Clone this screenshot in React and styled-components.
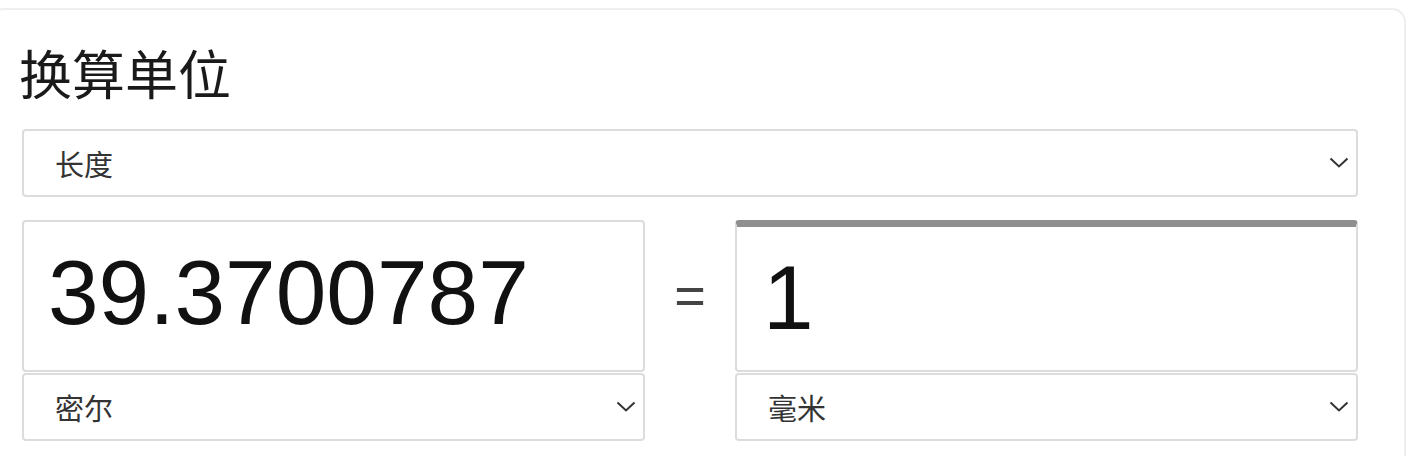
import React from "react";
import styled, { createGlobalStyle } from "styled-components";

const GlobalStyle = createGlobalStyle`
  html, body { margin: 0; padding: 0; background: #ffffff; overflow: hidden; }
  body { padding-top: 8px; font-family: "Noto Sans CJK SC", "Noto Sans", sans-serif; }
`;

const Card = styled.section`
  box-sizing: border-box;
  margin-left: -10px;
  width: 1416px;
  min-height: 470px;
  border: 2px solid #eeeeee;
  border-radius: 14px;
  padding: 35px 46px 30px 30px;
`;

const Title = styled.h1`
  margin: 0 0 30px -3px;
  font-family: "Noto Sans CJK SC", "Microsoft YaHei", sans-serif;
  font-weight: 400;
  font-size: 53px;
  line-height: 1;
  padding-top: 1px;
  color: #1a1a1a;
`;

const Select = styled.div`
  box-sizing: border-box;
  display: flex;
  align-items: center;
  justify-content: space-between;
  height: 68px;
  border: 2px solid #dcdcdc;
  border-radius: 4px;
  padding: 0 7px 0 31px;
  background: #fff;
  font-family: "Noto Sans CJK SC", sans-serif;
  font-size: 29px;
  color: #333333;
`;

const Converter = styled.div`
  display: grid;
  grid-template-columns: 623px 90px 623px;
  grid-template-rows: 152px 68px;
  row-gap: 1px;
  margin-top: 23px;
`;

const ValueBox = styled.div`
  box-sizing: border-box;
  display: flex;
  align-items: center;
  border: 2px solid #dcdcdc;
  border-top: ${(p) => (p.$active ? "7px solid #8f8f8f" : "2px solid #dcdcdc")};
  border-radius: 4px;
  padding: 0 22px ${(p) => (p.$active ? "1px" : "6px")} ${(p) => (p.$active ? "26px" : "24px")};
  font-family: "Liberation Sans", Arial, sans-serif;
  font-size: 91px;
  color: #111111;
  white-space: nowrap;
`;

const Equals = styled.div`
  display: flex;
  align-items: center;
  justify-content: center;
  padding-bottom: 2px;
  font-family: "Liberation Sans", Arial, sans-serif;
  font-size: 54px;
  color: #444444;
`;

const Spacer = styled.div``;

const Chevron = () => (
  <svg width="20" height="12" viewBox="0 0 20 12" fill="none">
    <path d="M1.5 1.5 L10 9.5 L18.5 1.5" stroke="#333" strokeWidth="2" />
  </svg>
);

export default function App() {
  return (
    <>
      <GlobalStyle />
      <Card>
        <Title>换算单位</Title>
        <Select>
          <span>长度</span>
          <Chevron />
        </Select>
        <Converter>
          <ValueBox>39.3700787</ValueBox>
          <Equals>=</Equals>
          <ValueBox $active>1</ValueBox>
          <Select>
            <span>密尔</span>
            <Chevron />
          </Select>
          <Spacer />
          <Select>
            <span>毫米</span>
            <Chevron />
          </Select>
        </Converter>
      </Card>
    </>
  );
}
